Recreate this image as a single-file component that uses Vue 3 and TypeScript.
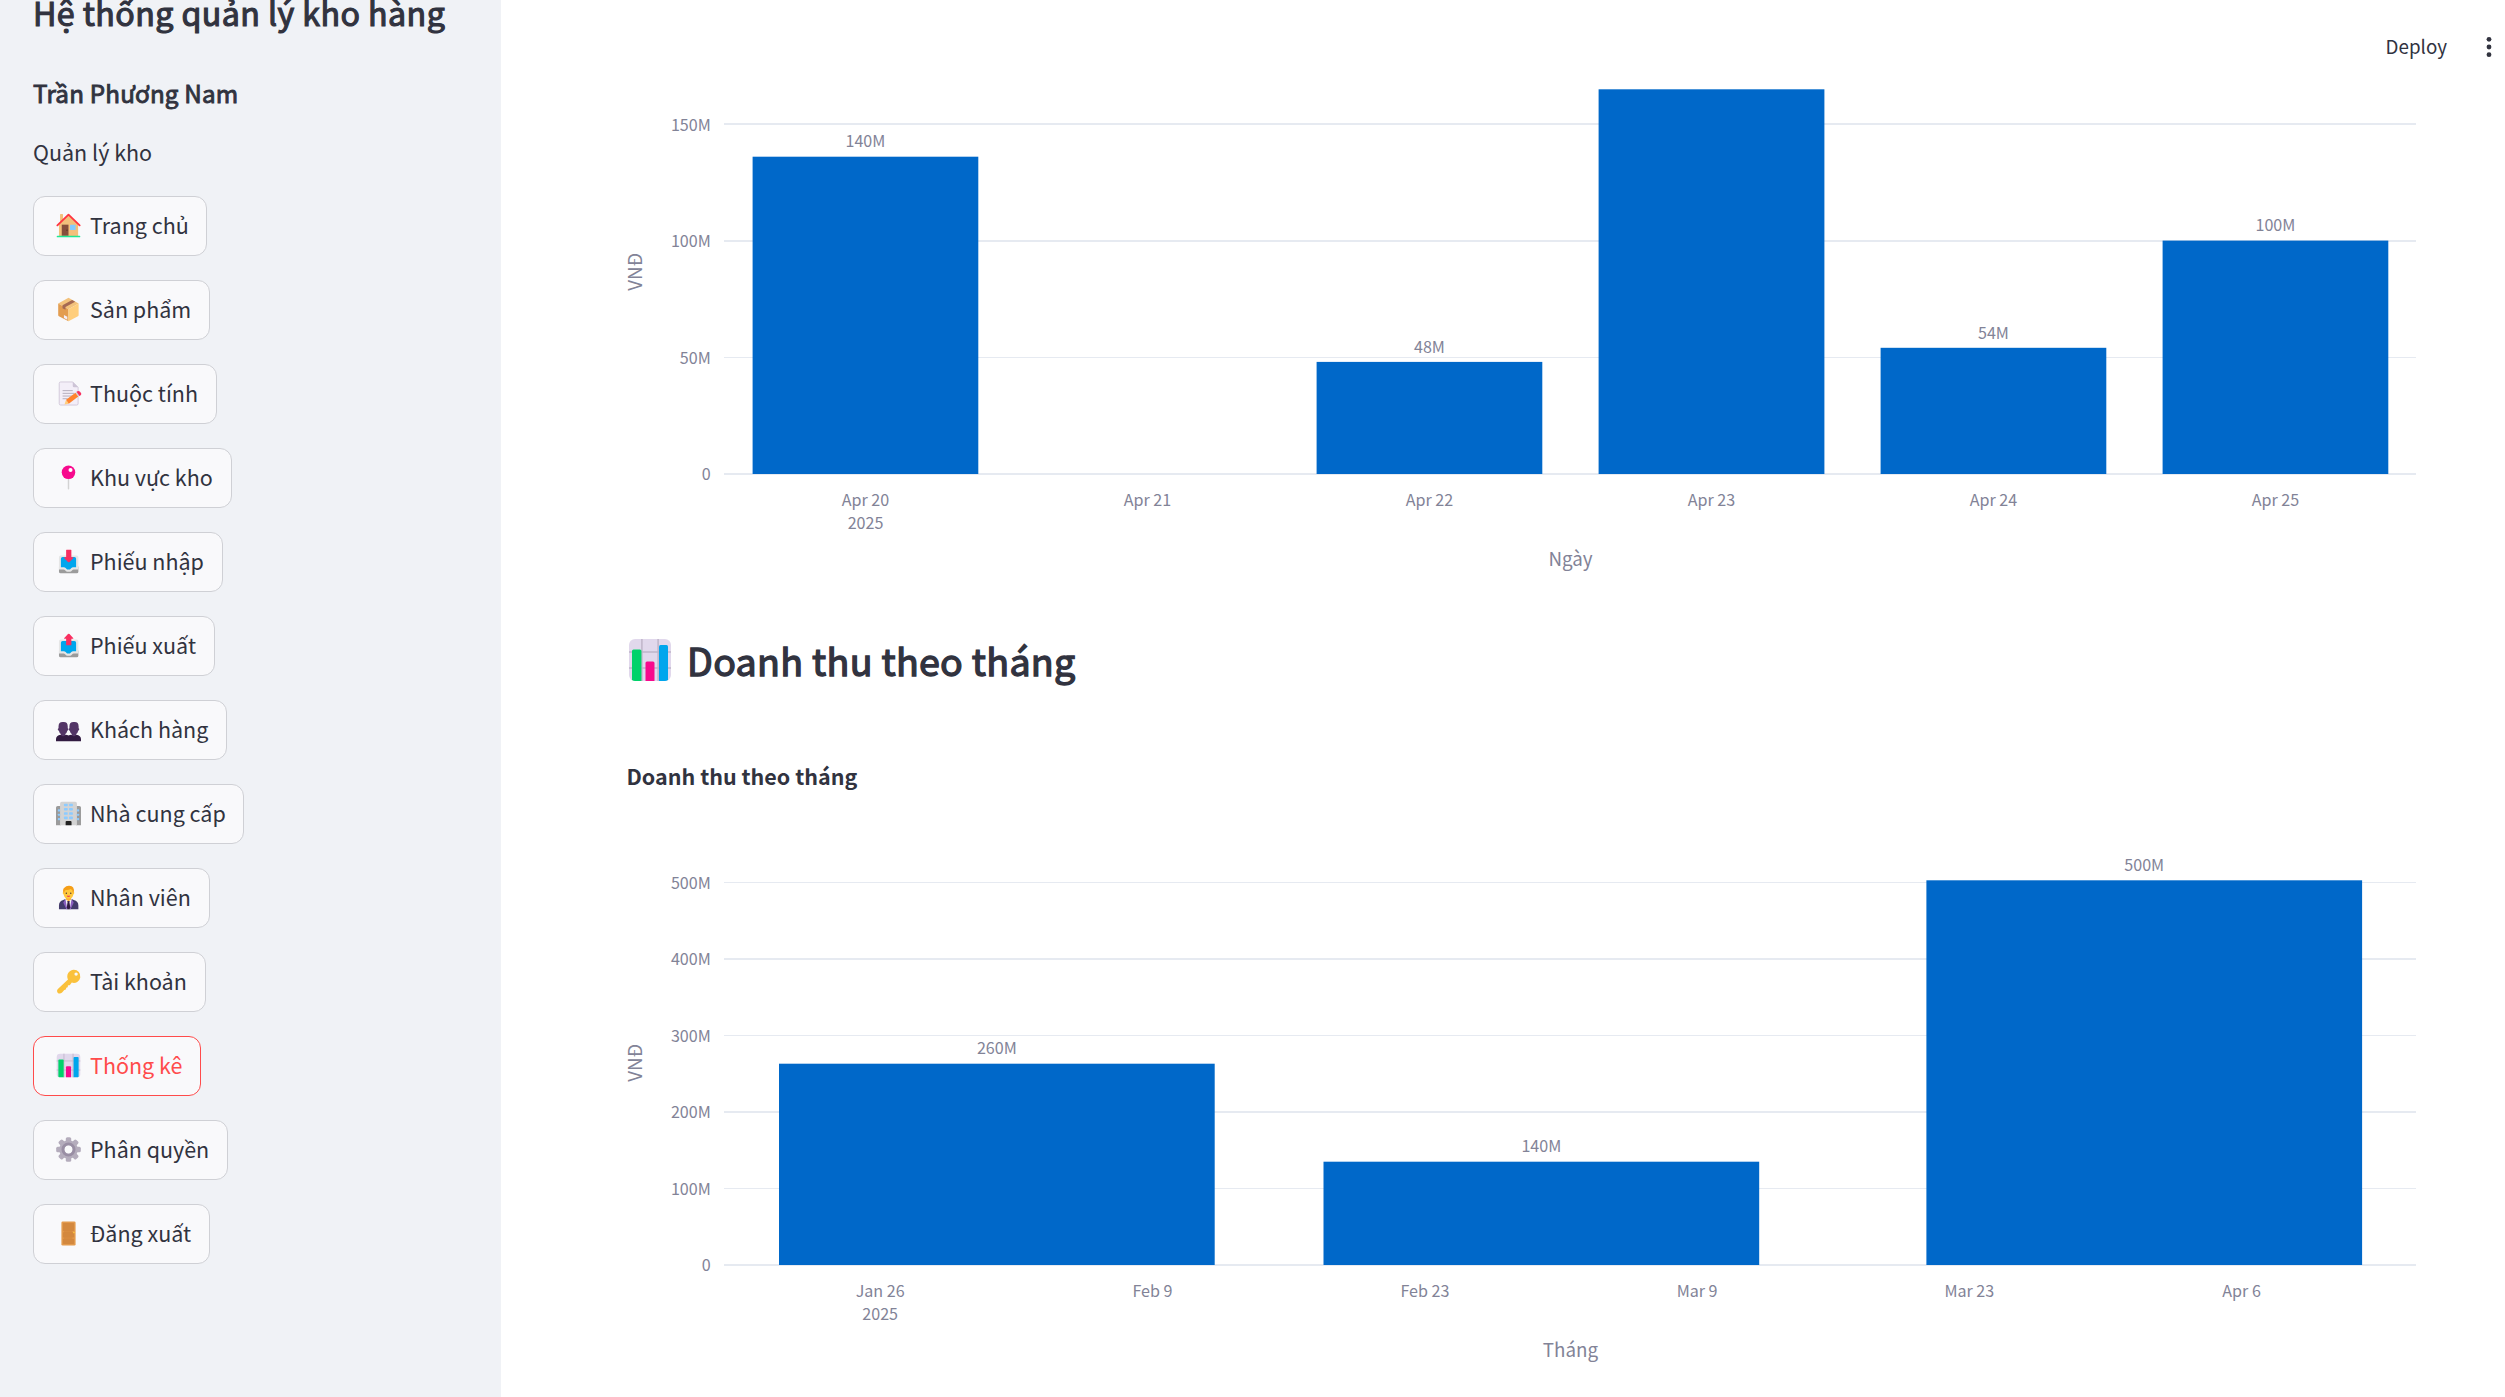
<script setup lang="ts">
interface NavItem {
  label: string
  icon: string
  width: number
  active?: boolean
}

interface Tick {
  label: string
  line: number
  thickness: number
  base: number
}

interface Bar {
  left: number
  right: number
  top: number
  label?: string
  base?: number
}

interface Mark {
  label: string
  x: number
}

interface Chart {
  name: string
  viewBox: string
  height: number
  title?: string
  zero: number
  ticks: Tick[]
  bars: Bar[]
  marks: Mark[]
  markBase: number
  yearBase: number
  axis: string
  axisBase: number
  unitY: number
}

const nav: NavItem[] = [
  { label: 'Trang chủ', icon: 'house', width: 174 },
  { label: 'Sản phẩm', icon: 'package', width: 177 },
  { label: 'Thuộc tính', icon: 'memo', width: 184 },
  { label: 'Khu vực kho', icon: 'pin', width: 199 },
  { label: 'Phiếu nhập', icon: 'inbox', width: 190 },
  { label: 'Phiếu xuất', icon: 'outbox', width: 182 },
  { label: 'Khách hàng', icon: 'people', width: 194 },
  { label: 'Nhà cung cấp', icon: 'office', width: 211 },
  { label: 'Nhân viên', icon: 'worker', width: 177 },
  { label: 'Tài khoản', icon: 'key', width: 173 },
  { label: 'Thống kê', icon: 'stats', width: 168, active: true },
  { label: 'Phân quyền', icon: 'gear', width: 195 },
  { label: 'Đăng xuất', icon: 'door', width: 177 },
]

const daily: Chart = {
  name: 'daily',
  viewBox: '501 0 2004 630',
  height: 630,
  zero: 474,
  ticks: [
    { label: '150M', line: 123, thickness: 2, base: 131 },
    { label: '100M', line: 240, thickness: 2, base: 247.3 },
    { label: '50M', line: 357, thickness: 1, base: 364 },
    { label: '0', line: 473, thickness: 2, base: 480.3 },
  ],
  bars: [
    { left: 752.6, right: 978.3, top: 156.7, label: '140M', base: 147.3 },
    { left: 1316.6, right: 1542.3, top: 361.9, label: '48M', base: 353 },
    { left: 1598.6, right: 1824.4, top: 89.3 },
    { left: 1880.6, right: 2106.3, top: 347.8, label: '54M', base: 339 },
    { left: 2162.6, right: 2388.3, top: 240.6, label: '100M', base: 231 },
  ],
  marks: [
    { label: 'Apr 20', x: 865.5 },
    { label: 'Apr 21', x: 1147.4 },
    { label: 'Apr 22', x: 1429.4 },
    { label: 'Apr 23', x: 1711.4 },
    { label: 'Apr 24', x: 1993.4 },
    { label: 'Apr 25', x: 2275.4 },
  ],
  markBase: 506,
  yearBase: 529,
  axis: 'Ngày',
  axisBase: 566,
  unitY: 271.8,
}

const monthly: Chart = {
  name: 'monthly',
  viewBox: '501 690 2004 707',
  height: 707,
  title: 'Doanh thu theo tháng',
  zero: 1265,
  ticks: [
    { label: '500M', line: 882, thickness: 1, base: 889.3 },
    { label: '400M', line: 958, thickness: 2, base: 965.3 },
    { label: '300M', line: 1035, thickness: 1, base: 1042 },
    { label: '200M', line: 1111, thickness: 2, base: 1118 },
    { label: '100M', line: 1188, thickness: 1, base: 1195 },
    { label: '0', line: 1264, thickness: 2, base: 1271 },
  ],
  bars: [
    { left: 779, right: 1214.7, top: 1063.7, label: '260M', base: 1054 },
    { left: 1323.5, right: 1759.2, top: 1161.7, label: '140M', base: 1152 },
    { left: 1926.4, right: 2362.1, top: 880.3, label: '500M', base: 871.4 },
  ],
  marks: [
    { label: 'Jan 26', x: 880.2 },
    { label: 'Feb 9', x: 1152.5 },
    { label: 'Feb 23', x: 1424.9 },
    { label: 'Mar 9', x: 1697.1 },
    { label: 'Mar 23', x: 1969.3 },
    { label: 'Apr 6', x: 2241.6 },
  ],
  markBase: 1297,
  yearBase: 1320,
  axis: 'Tháng',
  axisBase: 1357,
  unitY: 1062.8,
}

const sections = [
  { chart: daily, heading: '' },
  { chart: monthly, heading: 'Doanh thu theo tháng' },
]

const gearTeeth = [0, 45, 90, 135, 180, 225, 270, 315]
</script>

<template>
  <svg class="sprite" aria-hidden="true">
    <symbol id="i-house" viewBox="0 0 32 32">
      <path d="M6 3.2q0-.7.7-.7h2.1q.7 0 .7.7V12H6z" fill="#f3c07b" />
      <path d="M16 3.5 4.7 14.5V28.5H27.4V14.5z" fill="#f3c07b" />
      <path d="M2.8 15.8 16 3.2 29.2 15.8" fill="none" stroke="#ff3540" stroke-width="2.2" stroke-linecap="round" stroke-linejoin="round" />
      <rect x="8" y="15" width="8" height="13.2" fill="#874f3c" />
      <circle cx="14.2" cy="21.5" r=".7" fill="#4a2a20" />
      <rect x="17.8" y="15" width="6.6" height="6.2" rx=".6" fill="#83cbff" />
      <path d="M3 29h26" stroke="#1fe894" stroke-width="2" stroke-linecap="round" />
    </symbol>
    <symbol id="i-package" viewBox="0 0 32 32">
      <path d="M16 2.2 28 8.8 16 15.6 3.8 8.8z" fill="#f3c27c" />
      <path d="M3.8 8.8 16 15.6V30L4.6 24q-.8-.4-.8-1.2z" fill="#e39d50" />
      <path d="M28 8.8 16 15.6V30l11.2-6q.8-.4.8-1.2z" fill="#ffce7c" />
      <path d="m20.3 4.8 3.6 2L12.4 13v3.4L8.9 14.5v-3.4z" fill="#a56953" />
      <path d="m10.6 22.6 4 2.1v3.4l-4-2.1z" fill="#f3eef8" />
    </symbol>
    <symbol id="i-memo" viewBox="0 0 32 32">
      <path d="M5 4q0-1.7 1.7-1.7H21l6.4 6.4V28q0 1.7-1.7 1.7H6.7Q5 29.7 5 28z" fill="#f3eef8" stroke="#cdc4d6" stroke-width="1" />
      <path d="M21 2.3v4.7q0 1.7 1.7 1.7h4.7z" fill="#cdc4d6" />
      <path d="M9 12.6h12M9 15.8h14M9 19h12M9 22.2h6" stroke="#aaa1b3" stroke-width="1" />
      <path d="m11.3 29 1.8-5.500 3.200 4.600z" fill="#ffce7c" />
      <path d="m13.100 23.500 11.200-8.500 3.300 4.500-11.300 8.600z" fill="#ff822d" />
      <path d="m24.300 15 2-1.500 3.400 4.500-2.100 1.500z" fill="#d3d3d3" />
      <path d="M25.500 14q2.200-2 4.200-.2 2.500 2.500.7 4.200l-1.400 1z" fill="#f92f60" />
    </symbol>
    <symbol id="i-pin" viewBox="0 0 32 32">
      <path d="M16 17v12.300" stroke="#d3d3d3" stroke-width="1.700" stroke-linecap="round" />
      <circle cx="16" cy="9.900" r="8" fill="#f70a8d" />
      <circle cx="18.400" cy="7" r="2.400" fill="#fff" />
    </symbol>
    <symbol id="i-tray" viewBox="0 0 32 32">
      <path d="M4.700 22h23v6q0 2-2 2h-19q-2 0-2-2z" fill="#9b9b9b" />
      <path d="M4.700 11q0-2 2-2h19q2 0 2 2v14.500h-5.500q-1.200 0-1.800.8l-.8.9q-.6.8-1.600.8h-3.600q-1 0-1.600-.8l-.8-.9q-.6-.8-1.800-.8H4.700z" fill="#e6e6e6" />
      <path d="M9 10.800h14q2 0 2 2v10h-3.600q-1.200 0-2 1l-1.700 1.700h-3.400l-1.700-1.700q-.8-1-2-1H7v-10q0-2 2-2z" fill="#00a6ed" />
    </symbol>
    <symbol id="i-inbox" viewBox="0 0 32 32">
      <use href="#i-tray" width="32" height="32" />
      <path d="M13.700 2h5.200q.5 0 .5.500V11h1.700q1.200 0 .4 1l-4.300 4.500q-.9.900-1.800 0L11 12q-.8-1 .4-1h1.800V2.500q0-.5.500-.5z" fill="#f92f60" />
    </symbol>
    <symbol id="i-outbox" viewBox="0 0 32 32">
      <use href="#i-tray" width="32" height="32" />
      <path d="M13.700 15.800h5.200q.5 0 .5-.5V8h1.700q1.200 0 .4-1l-4.300-4.500q-.9-.9-1.800 0L11 7q-.8 1 .4 1h1.800v7.300q0 .5.500.5z" fill="#f92f60" />
    </symbol>
    <symbol id="i-people" viewBox="0 0 32 32">
      <path d="M4.200 12.500Q4.200 7.200 9 7.200h1.500q4.600 0 4.600 5.300v2q1 .3.700 1.500t-1.200 1.400q-.6 2.800-2.400 4V25H7v-3.600q-1.800-1.200-2.400-4-1.200-.2-1.300-1.400t.9-1.500z" fill="#533566" />
      <path d="M17.100 12.500q0-5.300 4.800-5.300h1.500q4.600 0 4.600 5.300v2q1 .3.700 1.500t-1.200 1.400q-.6 2.800-2.400 4V25h-5.200v-3.600q-1.800-1.200-2.400-4-1.200-.2-1.300-1.400t.9-1.500z" fill="#533566" />
      <path d="M1.200 30v-2.600q0-4.500 5.600-5.200 2.800 3.600 5.700 0 2 .2 3.500 1 1.500-.8 3.500-1 2.900 3.600 5.700 0 5.600.7 5.600 5.200V30z" fill="#321b41" />
    </symbol>
    <symbol id="i-office" viewBox="0 0 32 32">
      <path d="M1.200 9q0-2 2-2H7v23H1.200zM30.800 9q0-2-2-2H25v23h5.800z" fill="#9b9b9b" />
      <path d="M6 4q0-2 2-2h16q2 0 2 2v26H6z" fill="#d3d3d3" />
      <g fill="#8dcbff">
        <rect v-for="n in 4" :key="n" x="10.600" :y="n * 5.1 - 0.7" width="4.500" height="3" rx=".8" />
        <rect v-for="n in 4" :key="n + 4" x="16.700" :y="n * 5.1 - 0.7" width="4.500" height="3" rx=".8" />
        <rect v-for="n in 3" :key="n + 8" x="3.400" :y="n * 5.1 + 6" width="2.600" height="2.600" rx=".8" />
        <rect v-for="n in 3" :key="n + 12" x="26" :y="n * 5.1 + 6" width="2.600" height="2.600" rx=".8" />
      </g>
      <path d="M12.600 30v-4q0-1 1-1h5q1 0 1 1v4z" fill="#212121" />
    </symbol>
    <symbol id="i-worker" viewBox="0 0 32 32">
      <path d="M4.700 30v-4.500q0-5 5-6.500l3.300-1.500h6l3.300 1.500q5.400 1.500 5.400 6.500V30z" fill="#433b6b" />
      <path d="m12.500 17 3.500 2 3.500-2 .8 4L18.500 30h-5L11.800 21z" fill="#f4f4f4" />
      <path d="M12 18.500 9.800 22l3.700 8h1L12.800 20zM20 18.500l2.200 3.500-3.700 8h-1l1.700-10z" fill="#8a5fc0" />
      <path d="m15 20.500 1-1 1 1 1 7-.6 2.500h-2.800L14 27.500z" fill="#321b41" />
      <path d="M13 14h6v4.500l-3 2-3-2z" fill="#ffb02e" />
      <path d="M10 9.500q-.8 0-.8 1.300t1 1.500Q11 17.300 16 17.300t5.800-5q1-.2 1-1.500T22 9.500L20 6h-8z" fill="#ffc83d" />
      <path d="M9.800 10Q8.800 5.500 11.500 4 13 2 17 2.200q6.500.3 5.200 7.800h-1.200q0-3-2.300-4-2.500 1.500-6 1.200-1.700.8-1.700 2.800z" fill="#f59e17" />
      <circle cx="13.400" cy="11" r=".8" fill="#402a32" />
      <circle cx="18.700" cy="11" r=".8" fill="#402a32" />
      <path d="M14.300 14q1.700 1.300 3.400 0" fill="none" stroke="#f03a50" stroke-width="1.200" />
    </symbol>
    <symbol id="i-key" viewBox="0 0 32 32">
      <path fill-rule="evenodd" d="M22.300 2.200a7.700 7.700 0 1 1-2.400 15l-2 2.600q-.6.800-1.600.7l-1 .1-.1 1.400q0 .7-.7 1.200l-1.200.3-.2 1.200q-.1.700-.8 1l-1.300.5-2.600 2.800q-2.300 2.200-4.700.8-2.400-2.600-.3-5l12-11.300a7.700 7.700 0 0 1 6.900-11.300zM25 5.200a2 2 0 1 0 0 4 2 2 0 0 0 0-4z" fill="#fac13c" />
    </symbol>
    <symbol id="i-stats" viewBox="0 0 32 32">
      <rect x="2" y="2" width="28" height="28" rx="4" fill="#e1d8ec" />
      <path d="M10.600 2v28M21.400 2v28M2 10.600h28M2 21.400h28" stroke="#bfb5c9" stroke-width="1" />
      <path d="M4 29.400V10q0-1 1-1h4.300q1 0 1 1v20H6q-1 0-2-.6z" fill="#00d26a" />
      <path d="M13 30V18q0-1 1-1h4q1 0 1 1v12z" fill="#f70a8d" />
      <path d="M22 30V7q0-1 1-1h4q1 0 1 1v22.400q-1 .6-2 .6z" fill="#00a6ed" />
    </symbol>
    <symbol id="i-gear" viewBox="0 0 32 32">
      <g fill="#b4acbc">
        <rect v-for="a in gearTeeth" :key="a" x="12.800" y="1.400" width="6.400" height="8" rx="1.800" :transform="`rotate(${a} 16 16)`" />
      </g>
      <circle cx="16" cy="16" r="8" fill="none" stroke="#b4acbc" stroke-width="6" />
      <circle cx="16" cy="16" r="6.600" fill="none" stroke="#998ea4" stroke-width="3.400" />
    </symbol>
    <symbol id="i-door" viewBox="0 0 32 32">
      <rect x="7.600" y="1.700" width="16.800" height="28.600" rx="1.600" fill="#e39a4c" />
      <rect x="9.400" y="3.500" width="13.200" height="9.500" rx=".8" fill="#d3883e" />
      <rect x="9.400" y="14.600" width="13.200" height="6" rx=".8" fill="#d3883e" />
      <rect x="9.400" y="22.200" width="13.200" height="6.300" rx=".8" fill="#d3883e" />
      <path d="M10.500 14h10M10.500 21.400h10" stroke="#c97c33" stroke-width=".8" />
      <circle cx="22.400" cy="14.800" r="1" fill="#ffc83d" />
    </symbol>
  </svg>

  <div class="page">
    <aside class="sidebar">
      <h1 class="title">Hệ thống quản lý kho hàng</h1>
      <h3 class="user">Trần Phương Nam</h3>
      <p class="role">Quản lý kho</p>
      <nav class="nav">
        <button
          v-for="item in nav"
          :key="item.label"
          type="button"
          class="nav-btn"
          :class="{ active: item.active }"
          :style="{ width: item.width + 'px' }"
        >
          <svg class="nav-icon"><use :href="'#i-' + item.icon" /></svg>
          <span class="nav-label">{{ item.label }}</span>
        </button>
      </nav>
    </aside>

    <main class="main">
      <header class="toolbar">
        <span class="deploy">Deploy</span>
        <svg class="dots" viewBox="0 0 6 22">
          <circle cx="3" cy="3.300" r="2.400" />
          <circle cx="3" cy="11" r="2.400" />
          <circle cx="3" cy="18.700" r="2.400" />
        </svg>
      </header>

      <section v-for="s in sections" :key="s.chart.name">
        <h2 v-if="s.heading" class="heading">
          <svg class="heading-icon"><use href="#i-stats" /></svg>
          <span class="heading-text">{{ s.heading }}</span>
        </h2>
        <svg class="chart" :viewBox="s.chart.viewBox" width="2004" :height="s.chart.height">
          <text v-if="s.chart.title" class="chart-title" x="626.500" y="785">{{ s.chart.title }}</text>
          <g v-for="t in s.chart.ticks" :key="t.label">
            <rect class="grid" x="724" :y="t.line" width="1692" :height="t.thickness" />
            <text class="tick" x="710.800" :y="t.base" text-anchor="end">{{ t.label }}</text>
          </g>
          <g v-for="b in s.chart.bars" :key="b.left">
            <rect class="bar" :x="b.left" :y="b.top" :width="b.right - b.left" :height="s.chart.zero - b.top" />
            <text v-if="b.label" class="tick" :x="(b.left + b.right) / 2" :y="b.base" text-anchor="middle">{{ b.label }}</text>
          </g>
          <text v-for="m in s.chart.marks" :key="m.label" class="tick" :x="m.x" :y="s.chart.markBase" text-anchor="middle">{{ m.label }}</text>
          <text class="tick" :x="s.chart.marks[0].x" :y="s.chart.yearBase" text-anchor="middle">2025</text>
          <text class="axis" x="1570.500" :y="s.chart.axisBase" text-anchor="middle">{{ s.chart.axis }}</text>
          <text class="axis" text-anchor="middle" :transform="`translate(642 ${s.chart.unitY}) rotate(-90)`">VNĐ</text>
        </svg>
      </section>
    </main>
  </div>
</template>

<style>
html,
body {
  margin: 0;
  overflow: hidden;
  background: #fff;
}
</style>

<style scoped>
.sprite {
  position: absolute;
  width: 0;
  height: 0;
}

.page {
  display: flex;
  width: 2505px;
  height: 1397px;
  overflow: hidden;
  color: #31333f;
  font-family: "Noto Sans CJK SC", "Noto Sans", sans-serif;
}

.sidebar {
  flex: none;
  box-sizing: border-box;
  width: 501px;
  height: 1397px;
  padding-left: 33px;
  background: #f0f2f6;
  overflow: hidden;
}

.title {
  margin: -9px 0 0;
  font-size: 32.2px;
  font-weight: 400;
  line-height: 43px;
  letter-spacing: 0.42px;
  -webkit-text-stroke: 1.15px #31333f;
  white-space: nowrap;
}

.user {
  margin: 43px 0 0;
  font-size: 24.2px;
  font-weight: 400;
  line-height: 32px;
  letter-spacing: 0.2px;
  -webkit-text-stroke: 0.9px #31333f;
  white-space: nowrap;
}

.role {
  margin: 25px 0 0;
  font-size: 21.5px;
  line-height: 36px;
}

.nav {
  display: flex;
  flex-direction: column;
  align-items: flex-start;
  gap: 24px;
  margin-top: 26px;
}

.nav-btn {
  display: flex;
  align-items: center;
  box-sizing: border-box;
  height: 60px;
  padding: 0 0 3px 21px;
  border: 1px solid #cfd0d5;
  border-radius: 12px;
  background: #f9f9fb;
  color: #31333f;
  font: inherit;
  font-size: 21.5px;
  line-height: 36px;
  white-space: nowrap;
}

.nav-btn.active {
  border-color: #ff4b4b;
  color: #ff4b4b;
}

.nav-icon {
  flex: none;
  width: 27px;
  height: 27px;
  margin-top: 2px;
}

.nav-label {
  margin-left: 8px;
}

.main {
  position: relative;
  flex: 1;
  min-width: 0;
}

.toolbar {
  position: absolute;
  top: 0;
  right: 0;
  display: flex;
  align-items: center;
  gap: 39px;
  height: 89px;
  padding-right: 13px;
}

.deploy {
  padding-top: 2px;
  font-size: 18.8px;
  line-height: 30px;
}

.dots {
  width: 6px;
  height: 22px;
  margin-top: 5px;
  fill: #31333f;
}

.chart {
  display: block;
}

.heading {
  display: flex;
  align-items: center;
  gap: 13px;
  height: 60px;
  margin: 0 0 0 125px;
  font-size: 37.6px;
  font-weight: 400;
  line-height: 60px;
  letter-spacing: 0.29px;
  -webkit-text-stroke: 1.35px #31333f;
  white-space: nowrap;
}

.heading-icon {
  width: 48px;
  height: 48px;
}

.grid {
  fill: #e6eaf1;
}

.bar {
  fill: #0068c9;
}

.tick {
  fill: #828397;
  font-size: 16.1px;
}

.axis {
  fill: #828397;
  font-size: 18.8px;
}

.chart-title {
  fill: #31333f;
  font-size: 21.5px;
  font-weight: 700;
}
</style>
